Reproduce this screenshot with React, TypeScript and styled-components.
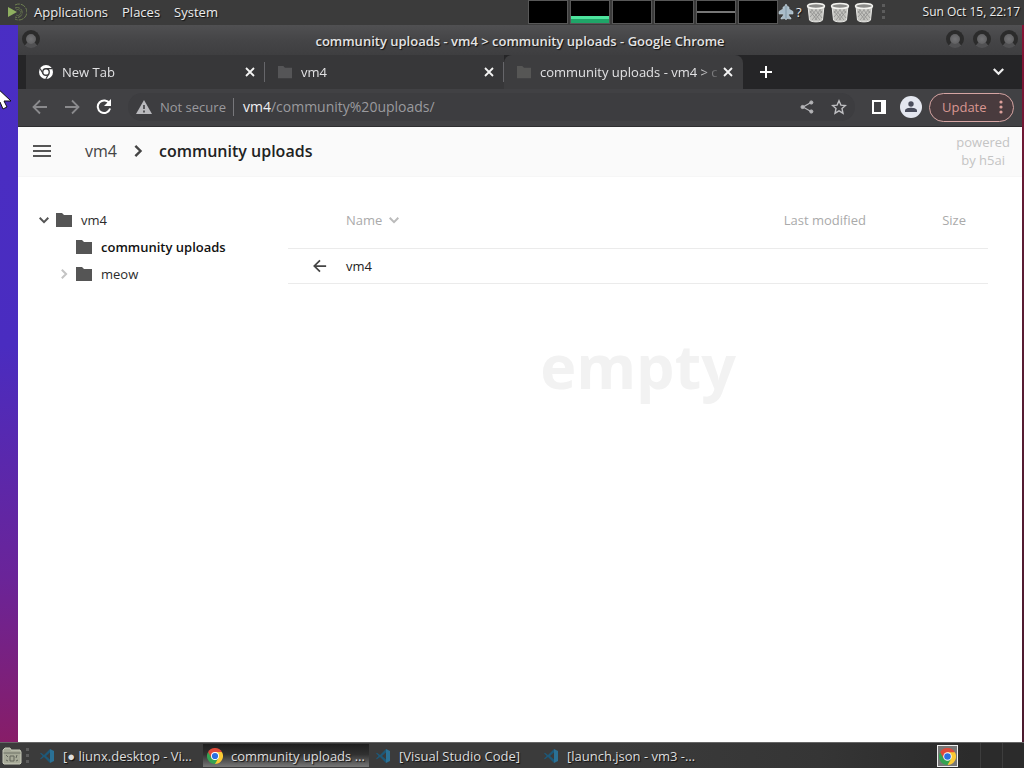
import React from 'react';
import styled, { createGlobalStyle, css } from 'styled-components';

const ui = '"Open Sans", "Noto Sans", sans-serif';

const GlobalStyle = createGlobalStyle`
  *, *::before, *::after { box-sizing: border-box; }
  body { margin: 0; font-family: ${ui}; font-size: 13px; line-height: 18px; }
  button, input { font: inherit; color: inherit; margin: 0; padding: 0; border: 0; background: none; }
  button { cursor: pointer; text-shadow: inherit; }
  a { color: inherit; text-decoration: none; }
  svg { display: block; flex: none; }
`;

const Desktop = styled.div`
  position: relative;
  display: flex;
  flex-direction: column;
  min-height: 100vh;
  overflow: hidden;
  background:
    linear-gradient(#8c1236, #5c1c34 30%, #4a1a2e) right / 2px 100% no-repeat,
    linear-gradient(#4a2ec4 0%, #4a2cc0 45%, #6a2499 75%, #8c1c60 100%);
`;

/* ---- top panel ---- */
const TopPanel = styled.header`
  display: flex;
  align-items: center;
  height: 25px;
  padding: 0 4px 1px 8px;
  background: #3b3b3b;
  color: #ececec;
  text-shadow: 1px 1px 1px #111;
`;
const MenuBar = styled.nav`
  display: flex;
  flex: 1;
  gap: 14px;
  margin-left: 7px;
`;
const Monitors = styled.div`
  display: flex;
  gap: 2px;
  height: 24px;
`;
const Monitor = styled.div<{ $kind?: 'memory' | 'line' }>`
  width: 40px;
  border: 1px solid #585858;
  background: #000;
  ${(p) => p.$kind === 'memory' && css`
    background: linear-gradient(#000 15px, #4de39d 15px, #4de39d 18px, #1fa568 18px);
  `}
  ${(p) => p.$kind === 'line' && css`
    background: linear-gradient(#000 10px, #777 10px, #777 12px, #000 12px);
  `}
`;
const Tray = styled.div`
  display: flex;
  align-items: center;
  gap: 4px;
`;
const Weather = styled.div`
  display: flex;
  align-items: center;
  gap: 2px;
`;
const Grip = styled.div`
  width: 3px;
  height: 16px;
  margin: 0 4px;
  background: repeating-linear-gradient(#5c5c5c 0 3px, #3a3a3a 3px 6px);
`;
const Clock = styled.time`
  margin-left: 34px;
  font-size: 12px;
`;

/* ---- browser window ---- */
const Window = styled.section`
  display: flex;
  flex: 1;
  flex-direction: column;
  margin: 0 2px 0 18px;
  background: #414144;
`;
const TitleBar = styled.div`
  display: grid;
  grid-template-columns: 88px 1fr 88px;
  align-items: center;
  height: 30px;
  padding: 0 4px;
  background: linear-gradient(#505052, #454547 50%, #3e3e40);
`;
const Title = styled.h1`
  margin: 2px 0 0;
  color: #e4e4e4;
  font-size: 13px;
  font-weight: 600;
  line-height: 18px;
  text-align: center;
  text-shadow: 1px 1px 1px #111;
`;
const WindowButtons = styled.div<{ $end?: boolean }>`
  display: flex;
  justify-content: ${(p) => (p.$end ? 'flex-end' : 'flex-start')};
  gap: 9px;
  padding-bottom: 3px;
`;
const RoundButton = styled.button`
  width: 18px;
  height: 18px;
  border: 4px solid #2b2b2b;
  border-bottom-color: #515153;
  border-radius: 50%;
  background: radial-gradient(#737375, #5a5a5c);
`;
const TabStrip = styled.div`
  display: flex;
  height: 34px;
  padding: 0 8px;
  background: #252527;
`;
const Tab = styled.div<{ $active?: boolean; $divider?: boolean }>`
  position: relative;
  display: flex;
  align-items: center;
  flex: 0 1 239px;
  min-width: 0;
  padding: 0 8px 0 13px;
  background: ${(p) => (p.$active ? '#3d3d3f' : '#373739')};
  color: #e2e2e4;
  ${(p) => p.$active && 'border-radius: 8px 8px 0 0;'}
  ${(p) => p.$divider && css`
    &::after {
      content: '';
      position: absolute;
      right: 0;
      top: 7px;
      height: 20px;
      border-right: 1px solid #66666a;
    }
  `}
`;
const TabLabel = styled.button`
  flex: 1;
  min-width: 0;
  margin: 0 0 0 9px;
  overflow: hidden;
  text-align: left;
  white-space: nowrap;
  mask-image: linear-gradient(to right, #000 calc(100% - 22px), transparent);
`;
const IconButton = styled.button<{ $size?: number; $tone?: string }>`
  display: grid;
  place-items: center;
  flex: none;
  width: ${(p) => p.$size ?? 32}px;
  height: ${(p) => p.$size ?? 32}px;
  color: ${(p) => p.$tone ?? '#ffffff'};
`;
const Spacer = styled.div`
  flex: 1;
`;
const NewTab = styled(IconButton)`
  margin: 1px 0 0 7px;
`;
const Toolbar = styled.div`
  display: flex;
  align-items: center;
  height: 38px;
  padding: 0 8px 1px 6px;
  border-bottom: 1px solid #2e2e30;
`;
const AddressBar = styled.form`
  display: flex;
  flex: 1;
  align-items: center;
  height: 28px;
  margin: 0 8px 0 8px;
  padding: 0 0 0 8px;
  border-radius: 14px;
  background: #3d3d40;
  color: #9a9a9e;
  font-size: 14px;
`;
const Security = styled.button`
  display: flex;
  align-items: center;
  gap: 8px;
  margin-right: 9px;
  padding-right: 7px;
  border-right: 1px solid #77777b;
  font-size: 13px;
  line-height: 18px;
  white-space: nowrap;
`;
const Host = styled.label`
  color: #f0f0f2;
`;
const AddressInput = styled.input`
  flex: 1;
  min-width: 0;
  outline: 0;
`;
const Avatar = styled.span`
  display: grid;
  place-items: center;
  width: 22px;
  height: 22px;
  border-radius: 50%;
  background: #e4e7f0;
`;
const Update = styled.button`
  display: flex;
  align-items: center;
  justify-content: space-between;
  width: 85px;
  height: 29px;
  margin-left: 2px;
  padding: 0 10px 0 12px;
  border: 1px solid #d6a5a3;
  border-radius: 15px;
  background: #493b3e;
  color: #d99792;
`;

/* ---- directory listing page ---- */
const Page = styled.div`
  display: flex;
  flex: 1;
  flex-direction: column;
  background: #fff;
  color: #333;
`;
const PageHeader = styled.header`
  display: flex;
  align-items: center;
  height: 50px;
  padding: 0 12px 1px 8px;
  border-bottom: 1px solid #f6f6f6;
  background: #fafafa;
`;
const Crumbs = styled.nav`
  display: flex;
  flex: 1;
  align-items: center;
  gap: 15px;
  margin-left: 27px;
  font-size: 16px;
  line-height: 24px;
`;
const Crumb = styled.a<{ $current?: boolean }>`
  font-weight: ${(p) => (p.$current ? 600 : 400)};
  color: ${(p) => (p.$current ? '#222' : '#444')};
`;
const Powered = styled.a`
  color: #c4c4c4;
  text-align: center;
`;
const PageBody = styled.div`
  display: flex;
  flex: 1;
`;
const Sidebar = styled.aside`
  flex: 0 0 270px;
  padding: 29px 0 0 17px;
`;
const TreeRow = styled.div<{ $depth: number }>`
  display: flex;
  align-items: center;
  height: 27px;
  padding-left: ${(p) => p.$depth * 20}px;
`;
const Toggle = styled.button`
  display: grid;
  place-items: center;
  width: 18px;
  height: 18px;
  margin-right: 3px;
`;
const ToggleSpace = styled.span`
  width: 21px;
`;
const TreeLink = styled.a<{ $current?: boolean }>`
  display: flex;
  align-items: center;
  gap: 9px;
  font-weight: ${(p) => (p.$current ? 600 : 400)};
  color: ${(p) => (p.$current ? '#111' : '#2b2b2b')};
`;
const Content = styled.main`
  flex: 1;
  padding: 14px 34px 0 0;
`;
const Listing = styled.table`
  width: 100%;
  table-layout: fixed;
  border-collapse: collapse;
`;
const HeadCell = styled.th<{ $align?: 'right'; $width?: number; $icon?: boolean }>`
  width: ${(p) => (p.$width ? `${p.$width}px` : 'auto')};
  height: 57px;
  padding: ${(p) => (p.$icon ? '0' : '2px 22px 0 0')};
  border-bottom: 1px solid #ebebeb;
  color: #aaa;
  font-weight: 400;
  text-align: ${(p) => p.$align ?? 'left'};
`;
const Cell = styled.td`
  height: 35px;
  padding: 0;
  border-bottom: 1px solid #ebebeb;
  color: #222;
`;
const ArrowWrap = styled.a`
  display: block;
  padding-left: 25px;
  color: #444;
`;
const SortButton = styled.button`
  display: flex;
  align-items: center;
  gap: 7px;
`;
const PlainSort = styled.button``;
const Empty = styled.p`
  margin: 38px 0 0;
  color: #f2f2f2;
  font-size: 61px;
  font-weight: 700;
  line-height: 88px;
  text-align: center;
`;

/* ---- bottom panel ---- */
const BottomPanel = styled.footer`
  display: flex;
  align-items: center;
  height: 26px;
  padding-left: 2px;
  border-top: 1px solid #666;
  background: linear-gradient(to right, #3b3b3b 60%, #353535 80%, #2b2b2b 95%);
  color: #dedede;
  text-shadow: 1px 1px 1px #111;
`;
const TaskList = styled.div`
  display: flex;
  flex: 1;
  gap: 2px;
  min-width: 0;
  margin-left: 2px;
`;
const Task = styled.button<{ $active?: boolean }>`
  display: flex;
  align-items: center;
  gap: 8px;
  flex: 0 1 166px;
  min-width: 0;
  height: 23px;
  padding: 0 0 0 4px;
  text-align: left;
  white-space: nowrap;
  ${(p) => p.$active && 'background: linear-gradient(#1f1f1f, #303030 45%, #777);'}
`;
const Workspaces = styled.div`
  display: flex;
  height: 25px;
`;
const TrayApp = styled.button`
  display: grid;
  place-items: center;
  width: 21px;
  height: 22px;
  margin: 1px 22px 0 0;
  border: 1px solid #eee;
  background: #777;
`;
const Workspace = styled.button`
  width: 22px;
  border-left: 1px solid #3d3d3d;
`;

const Pointer = styled.svg`
  position: absolute;
  left: -6px;
  top: 85px;
`;

const MenuLogo = () => (
  <svg width="19" height="18" viewBox="0 0 19 18" fill="none">
    <path d="M7 2a8 8 0 1 1 0 14M7 5a5 5 0 1 1 0 9" stroke="#6d7e50" strokeWidth="1" strokeDasharray="5 1" />
    <path d="M8 7a3 3 0 1 1 0 5" stroke="#59664a" />
    <path d="M0 4l9 5-9 5z" fill="#8fb060" />
  </svg>
);
const Jet = () => (
  <svg width="16" height="18" viewBox="0 0 16 18">
    <path d="M8 1l1.500 2.500L11 4v2l4 2.500v2.500h-4.500l.5 2 2 2v1l-4-.5L8 17l-1-1.500-4 .5v-1l2-2 .5-2H1V8.500L5 6V4l1.500-.5z" fill="#a9bcc9" stroke="#c5d3dc" strokeWidth=".6" />
    <path d="M8 3v12" stroke="#7f95a4" />
  </svg>
);
const Trash = () => (
  <svg width="20" height="21" viewBox="0 0 20 21">
    <path d="M2 4l1.500 14c1 2.500 12 2.500 13 0L18 4z" fill="#c4c4c0" stroke="#e8e8e5" />
    <path d="M4 9l7 9M5 7l9 11M9 7l7 9M13 7l3 4M16 9l-7 9M15 7L6 18M11 7l-7 8M7 7l-3 4" stroke="#8a8a88" strokeWidth=".7" />
    <ellipse cx="10" cy="4" rx="8.500" ry="2.600" fill="#8a8a88" stroke="#f4f4f0" strokeWidth="1.500" />
  </svg>
);
const ChromeMono = () => (
  <svg width="14" height="14" viewBox="0 0 16 16">
    <circle cx="8" cy="8" r="8" fill="#fff" />
    <path d="M8 4.200h7M4.700 9.900L1.200 4M11.300 9.900L7.800 16" stroke="#373739" strokeWidth="1.300" />
    <circle cx="8" cy="8" r="3.700" fill="#fff" stroke="#373739" strokeWidth="1.500" />
  </svg>
);
const ChromeLogo = ({ size }: { size: number }) => (
  <svg width={size} height={size} viewBox="0 0 16 16">
    <path d="M8 8L1.070 4A8 8 0 0 1 14.930 4z" fill="#e04a3a" />
    <path d="M8 8L14.930 4A8 8 0 0 1 8 16z" fill="#fbc934" />
    <path d="M8 8v8A8 8 0 0 1 1.070 4z" fill="#35a352" />
    <path d="M8 4h6.930L11.500 10z" fill="#fbc934" />
    <path d="M11.460 10L8 16 4.500 10z" fill="#35a352" />
    <path d="M1.070 4L4.540 10 8 4z" fill="#e04a3a" />
    <circle cx="8" cy="8" r="4" fill="#fff" />
    <circle cx="8" cy="8" r="3.100" fill="#2c6fe0" />
  </svg>
);
const Folder = ({ tone = '#555', width = 16 }: { tone?: string; width?: number }) => (
  <svg width={width} height={width} viewBox="0 0 16 16">
    <path d="M0 1h6l2 2h8v12H0z" fill={tone} />
  </svg>
);
const Cross = () => (
  <svg width="10" height="10" viewBox="0 0 10 10">
    <path d="M1 1l8 8M9 1L1 9" stroke="#f4f4f4" strokeWidth="1.800" />
  </svg>
);
const Arrow = ({ flip, size = 16, width = 2 }: { flip?: boolean; size?: number; width?: number }) => (
  <svg width={size} height={size} viewBox="0 0 16 16" fill="none" stroke="currentColor" strokeWidth={width}>
    <path d={flip ? 'M1 8h13M8 1.500L14.500 8 8 14.500' : 'M15 8H2M8 1.500L1.500 8 8 14.500'} />
  </svg>
);
const Chevron = ({ down, tone, size = 10, width = 2 }: { down?: boolean; tone: string; size?: number; width?: number }) => (
  <svg width={size} height={size} viewBox="0 0 10 10" fill="none" stroke={tone} strokeWidth={width}>
    <path d={down ? 'M.7 2.800L5 7.100l4.300-4.300' : 'M2.800.7L7.100 5 2.800 9.300'} />
  </svg>
);
const VSCode = () => (
  <svg width="16" height="16" viewBox="0 0 16 16">
    <path d="M11 1l4 2v10l-4 2z" fill="#2a7196" />
    <path d="M11 1L5 7 2 4.700 1 5.300 3.700 8 1 10.700l1 .6L5 9l6 6v-3.500L7 8l4-3.500z" fill="#1d5878" />
  </svg>
);
const FilesIcon = () => (
  <svg width="20" height="18" viewBox="0 0 20 18">
    <path d="M1 3l2-2h5l1 2h9l1 2v11l-1 1H2l-1-1z" fill="#a7aa98" stroke="#c9cbbb" />
    <path d="M1.500 6h17" stroke="#6f7267" />
    <path d="M8 9h4v5H8zM4 8l2 2M15 8l-1 3M4 13l2 1M14 14l2-1" stroke="#62655b" fill="none" />
  </svg>
);

const tabs = [
  { label: 'New Tab', icon: <ChromeMono />, divider: true },
  { label: 'vm4', icon: <Folder tone="#555557" width={14} />, divider: true },
  { label: 'community uploads - vm4 > c', icon: <Folder tone="#565655" width={14} />, active: true },
];

const tasks = [
  { label: '[● liunx.desktop - Vi…', icon: <VSCode /> },
  { label: 'community uploads …', icon: <ChromeLogo size={16} />, active: true },
  { label: '[Visual Studio Code]', icon: <VSCode /> },
  { label: '[launch.json - vm3 -…', icon: <VSCode /> },
];

export default function App() {
  return (
    <Desktop>
      <GlobalStyle />
      <TopPanel>
        <MenuLogo />
        <MenuBar>
          <button>Applications</button>
          <button>Places</button>
          <button>System</button>
        </MenuBar>
        <Monitors>
          <Monitor />
          <Monitor $kind="memory" />
          <Monitor />
          <Monitor />
          <Monitor $kind="line" />
          <Monitor />
        </Monitors>
        <Tray>
          <Weather><Jet /><span>?</span></Weather>
          <Trash />
          <Trash />
          <Trash />
          <Grip />
        </Tray>
        <Clock>Sun Oct 15, 22:17</Clock>
      </TopPanel>

      <Window>
        <TitleBar>
          <WindowButtons><RoundButton aria-label="Window menu" /></WindowButtons>
          <Title>community uploads - vm4 &gt; community uploads - Google Chrome</Title>
          <WindowButtons $end>
            <RoundButton aria-label="Minimize" />
            <RoundButton aria-label="Maximize" />
            <RoundButton aria-label="Close" />
          </WindowButtons>
        </TitleBar>
        <TabStrip>
          {tabs.map((t) => (
            <Tab key={t.label} $active={t.active} $divider={t.divider}>
              {t.icon}
              <TabLabel>{t.label}</TabLabel>
              <IconButton $size={14} aria-label="Close tab"><Cross /></IconButton>
            </Tab>
          ))}
          <NewTab aria-label="New tab">
            <svg width="12" height="12" viewBox="0 0 12 12"><path d="M6 0v12M0 6h12" stroke="#fff" strokeWidth="2" /></svg>
          </NewTab>
          <Spacer />
          <IconButton aria-label="Search tabs"><Chevron down tone="#eee" size={11} /></IconButton>
        </TabStrip>
        <Toolbar>
          <IconButton $tone="#8a8a8d" aria-label="Back"><Arrow width={1.8} /></IconButton>
          <IconButton $tone="#8a8a8d" aria-label="Forward"><Arrow flip width={1.8} /></IconButton>
          <IconButton aria-label="Reload">
            <svg width="16" height="16" viewBox="0 0 16 16" fill="none">
              <path d="M13.500 4.500A6.300 6.300 0 1 0 14.100 9.500" stroke="#fff" strokeWidth="2" />
              <path d="M15 0v7H8z" fill="#fff" />
            </svg>
          </IconButton>
          <AddressBar onSubmit={(e) => e.preventDefault()}>
            <Security type="button">
              <svg width="16" height="14" viewBox="0 0 16 14">
                <path d="M8 0l8 14H0z" fill="#b9b9bd" />
                <path d="M8 5v4M8 10.500v2" stroke="#3d3d40" strokeWidth="1.600" />
              </svg>
              Not secure
            </Security>
            <Host htmlFor="address">vm4</Host>
            <AddressInput id="address" defaultValue="/community%20uploads/" />
            <IconButton type="button" $tone="#b5b5b8" aria-label="Share">
              <svg width="14" height="14" viewBox="0 0 14 14" fill="currentColor" stroke="currentColor">
                <path d="M11 2.500L3 7l8 4.500" fill="none" strokeWidth="1.300" />
                <circle cx="11.300" cy="2.500" r="1.600" /><circle cx="2.600" cy="7" r="1.600" /><circle cx="11.300" cy="11.500" r="1.600" />
              </svg>
            </IconButton>
            <IconButton type="button" $tone="#bfbfc2" aria-label="Bookmark">
              <svg width="16" height="16" viewBox="0 0 16 16" fill="none" stroke="currentColor" strokeWidth="1.400">
                <path d="M8 1.800l1.900 4.300 4.600.4-3.500 3.100 1 4.600L8 11.800l-4 2.400 1-4.600L1.500 6.500l4.600-.4z" />
              </svg>
            </IconButton>
          </AddressBar>
          <IconButton aria-label="Side panel">
            <svg width="14" height="14" viewBox="0 0 14 14"><path d="M0 0h14v14H0zM2 2v10h7V2z" fill="#fff" fillRule="evenodd" /></svg>
          </IconButton>
          <IconButton aria-label="Profile">
            <Avatar>
              <svg width="12" height="12" viewBox="0 0 12 12" fill="#4a4d5c"><circle cx="6" cy="3" r="2.700" /><path d="M0 11V9.500C0 7.500 4 6.800 6 6.800s6 .7 6 2.700V11z" /></svg>
            </Avatar>
          </IconButton>
          <Update>
            Update
            <svg width="4" height="14" viewBox="0 0 4 14" fill="#dda09b"><circle cx="2" cy="2" r="1.600" /><circle cx="2" cy="7" r="1.600" /><circle cx="2" cy="12" r="1.600" /></svg>
          </Update>
        </Toolbar>

        <Page>
          <PageHeader>
            <IconButton aria-label="Toggle sidebar">
              <svg width="18" height="12" viewBox="0 0 18 12"><path d="M0 1h18M0 6h18M0 11h18" stroke="#555" strokeWidth="2" /></svg>
            </IconButton>
            <Crumbs>
              <Crumb href="#vm4">vm4</Crumb>
              <Chevron tone="#444" size={12} />
              <Crumb href="#community" $current>community uploads</Crumb>
            </Crumbs>
            <Powered href="#h5ai">powered<br />by h5ai</Powered>
          </PageHeader>
          <PageBody>
            <Sidebar>
              <TreeRow $depth={0}>
                <Toggle aria-label="Collapse vm4"><Chevron down tone="#555" /></Toggle>
                <TreeLink href="#vm4"><Folder />vm4</TreeLink>
              </TreeRow>
              <TreeRow $depth={1}>
                <ToggleSpace />
                <TreeLink href="#community" $current><Folder />community uploads</TreeLink>
              </TreeRow>
              <TreeRow $depth={1}>
                <Toggle aria-label="Expand meow"><Chevron tone="#c4c4c4" /></Toggle>
                <TreeLink href="#meow"><Folder />meow</TreeLink>
              </TreeRow>
            </Sidebar>
            <Content>
              <Listing>
                <thead>
                  <tr>
                    <HeadCell $width={58} $icon aria-label="Type" />
                    <HeadCell><SortButton>Name<Chevron down tone="#bbb" /></SortButton></HeadCell>
                    <HeadCell $width={140} $align="right"><PlainSort>Last modified</PlainSort></HeadCell>
                    <HeadCell $width={100} $align="right"><PlainSort>Size</PlainSort></HeadCell>
                  </tr>
                </thead>
                <tbody>
                  <tr>
                    <Cell><ArrowWrap href="#up" aria-label="Parent folder"><Arrow size={14} /></ArrowWrap></Cell>
                    <Cell><a href="#up">vm4</a></Cell>
                    <Cell />
                    <Cell />
                  </tr>
                </tbody>
              </Listing>
              <Empty>empty</Empty>
            </Content>
          </PageBody>
        </Page>
      </Window>

      <BottomPanel>
        <FilesIcon />
        <Grip />
        <TaskList>
          {tasks.map((t) => (
            <Task key={t.label} $active={t.active}>{t.icon}<span>{t.label}</span></Task>
          ))}
        </TaskList>
        <TrayApp aria-label="Google Chrome"><ChromeLogo size={17} /></TrayApp>
        <Workspaces>
          <Workspace aria-label="Workspace 1" />
          <Workspace aria-label="Workspace 2" />
        </Workspaces>
      </BottomPanel>

      <Pointer width="18" height="26" viewBox="0 0 18 26">
        <path d="M1 1v20l5-4 3 7 4-2-3-6h7z" fill="#fff" stroke="#111" />
      </Pointer>
    </Desktop>
  );
}
